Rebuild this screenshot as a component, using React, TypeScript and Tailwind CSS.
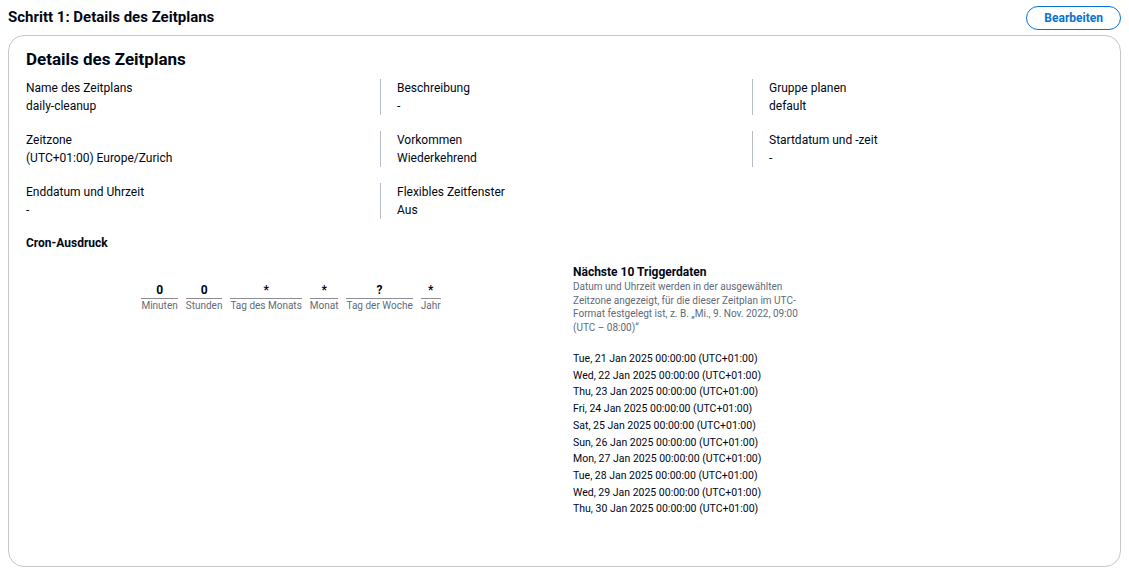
import React from 'react';

type Field = {
  label: string;
  value: string;
};

const fields: Field[] = [
  { label: 'Name des Zeitplans', value: 'daily-cleanup' },
  { label: 'Beschreibung', value: '-' },
  { label: 'Gruppe planen', value: 'default' },
  { label: 'Zeitzone', value: '(UTC+01:00) Europe/Zurich' },
  { label: 'Vorkommen', value: 'Wiederkehrend' },
  { label: 'Startdatum und -zeit', value: '-' },
  { label: 'Enddatum und Uhrzeit', value: '-' },
  { label: 'Flexibles Zeitfenster', value: 'Aus' },
];

const cronParts = [
  { value: '0', label: 'Minuten' },
  { value: '0', label: 'Stunden' },
  { value: '*', label: 'Tag des Monats' },
  { value: '*', label: 'Monat' },
  { value: '?', label: 'Tag der Woche' },
  { value: '*', label: 'Jahr' },
];

const triggerDates = [
  'Tue, 21 Jan 2025 00:00:00 (UTC+01:00)',
  'Wed, 22 Jan 2025 00:00:00 (UTC+01:00)',
  'Thu, 23 Jan 2025 00:00:00 (UTC+01:00)',
  'Fri, 24 Jan 2025 00:00:00 (UTC+01:00)',
  'Sat, 25 Jan 2025 00:00:00 (UTC+01:00)',
  'Sun, 26 Jan 2025 00:00:00 (UTC+01:00)',
  'Mon, 27 Jan 2025 00:00:00 (UTC+01:00)',
  'Tue, 28 Jan 2025 00:00:00 (UTC+01:00)',
  'Wed, 29 Jan 2025 00:00:00 (UTC+01:00)',
  'Thu, 30 Jan 2025 00:00:00 (UTC+01:00)',
];

const App: React.FC = () => {
  return (
    <div className="min-h-[576px] bg-white px-2 text-[#000716]" style={{ fontFamily: 'Roboto, "Liberation Sans", sans-serif' }}>
      <div className="flex h-[35px] items-center justify-between">
        <h2 className="text-[15px] font-bold">Schritt 1: Details des Zeitplans</h2>
        <button className="h-[24px] rounded-full border border-[#0972d3] px-[17px] text-[12px] font-bold text-[#0972d3]">
          Bearbeiten
        </button>
      </div>

      <div className="h-[532px] rounded-[16px] border border-[#c6c6cd] px-[17px] pt-[12px]">
        <h3 className="text-[17px] font-bold leading-[22px]">Details des Zeitplans</h3>

        <div className="mt-[9px] grid grid-cols-[354px_372px_1fr] gap-y-[16px]">
          {fields.map((field, i) => (
            <div
              key={field.label}
              className={i % 3 === 0 ? 'text-[12px] leading-[18px]' : 'border-l border-[#b6bec9] pl-[16px] text-[12px] leading-[18px]'}
            >
              <div>{field.label}</div>
              <div>{field.value}</div>
            </div>
          ))}
        </div>

        <div className="mt-[15px] text-[12px] font-bold">Cron-Ausdruck</div>

        <div className="grid grid-cols-2 gap-x-[17px]">
          <div className="flex justify-center gap-[8px] pt-[31px]">
            {cronParts.map((part, i) => (
              <div key={i} className="flex flex-col items-stretch text-center">
                <div className="border-b border-[#8c8c94] text-[12px] font-bold leading-[15px]">{part.value}</div>
                <div className="text-[10px] leading-[13px] text-[#5f6b7a]">{part.label}</div>
              </div>
            ))}
          </div>

          <div className="pt-[12px]">
            <div className="text-[12px] font-bold leading-[16px]">Nächste 10 Triggerdaten</div>
            <p className="w-[240px] text-[10px] leading-[13.5px] text-[#5f6b7a]">
              Datum und Uhrzeit werden in der ausgewählten Zeitzone angezeigt, für die dieser Zeitplan im UTC-Format festgelegt ist, z. B. „Mi., 9. Nov. 2022, 09:00 (UTC – 08:00)“
            </p>
            <div className="mt-[17px] flex flex-col">
              {triggerDates.map(d => (
                <div key={d} className="text-[10.5px] leading-[16.7px]">
                  {d}
                </div>
              ))}
            </div>
          </div>
        </div>
      </div>
    </div>
  );
};

export default App;
